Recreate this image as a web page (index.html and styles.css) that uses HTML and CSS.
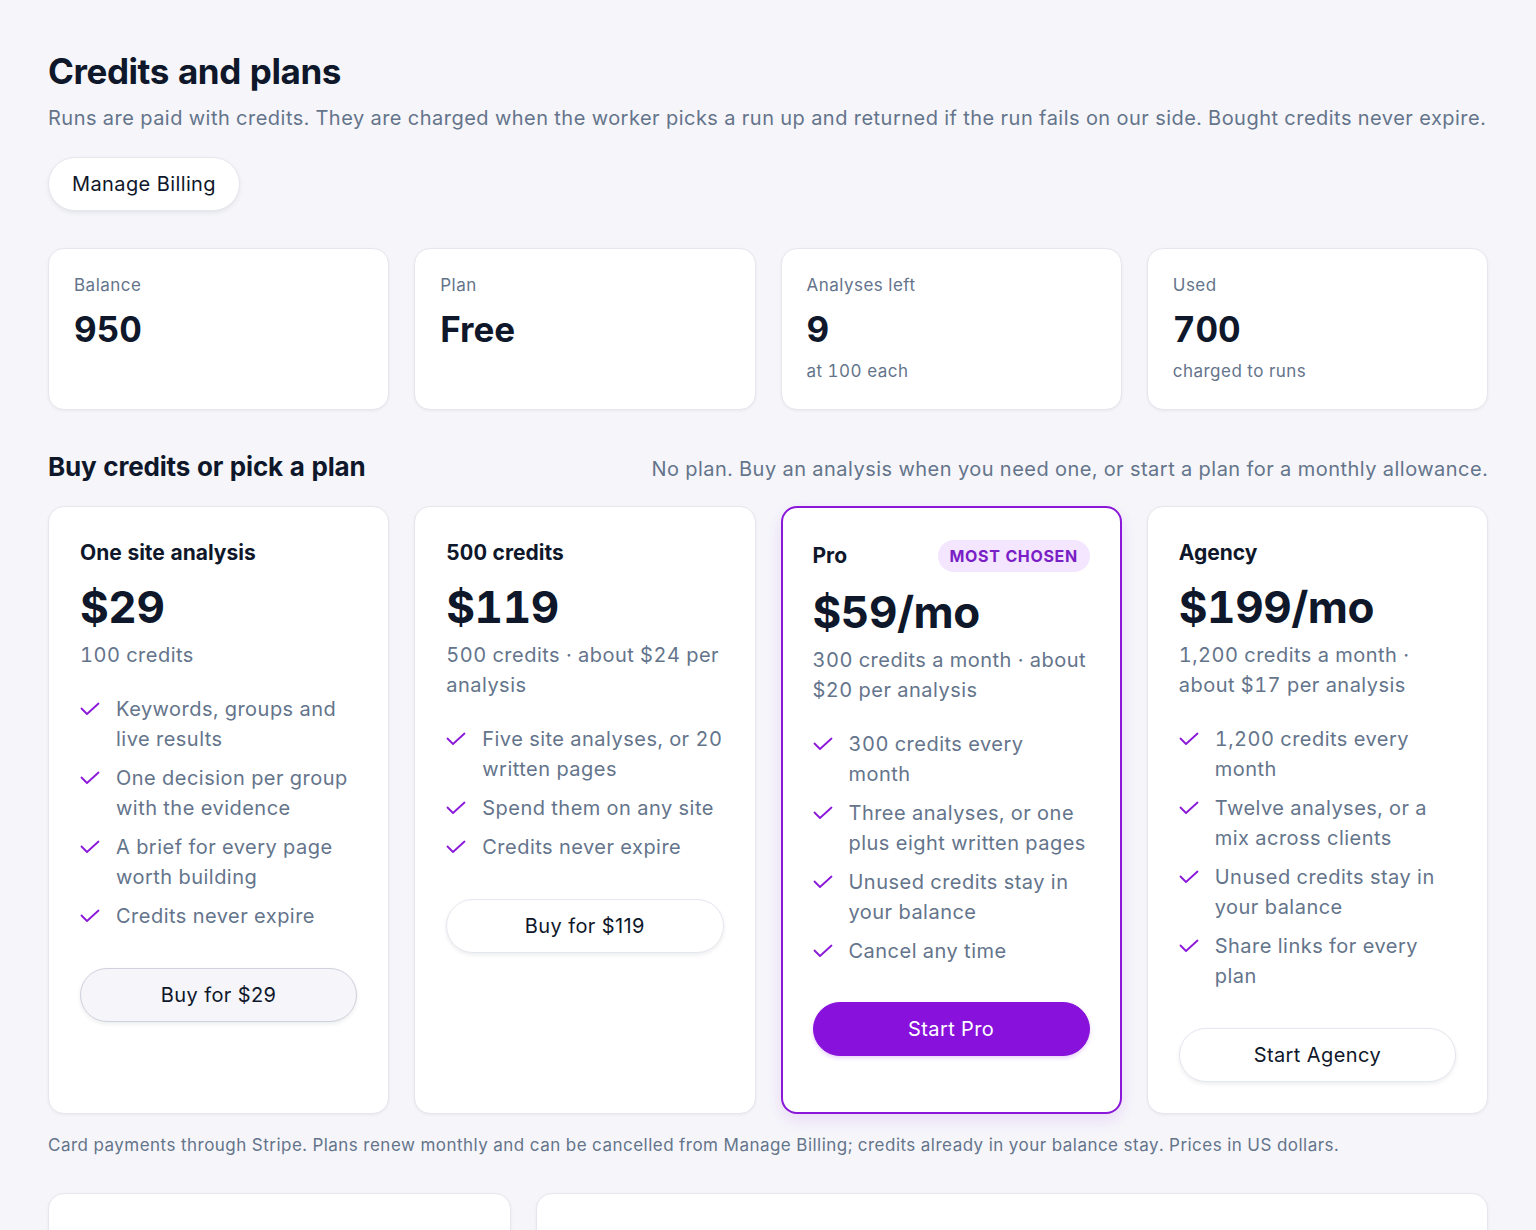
FILE: index.html
```html
<!DOCTYPE html>
<html lang="en">
<head>
<meta charset="utf-8">
<title>Credits and plans</title>
<link rel="stylesheet" href="styles.css">
</head>
<body>
<main class="page">
  <header class="page-head">
    <h1 class="title">Credits and plans</h1>
    <p class="lead">Runs are paid with credits. They are charged when the worker picks a run up and returned if the run fails on our side. Bought credits never expire.</p>
    <button class="btn btn-white manage">Manage Billing</button>
  </header>

  <section class="stats">
    <div class="card stat">
      <div class="stat-label">Balance</div>
      <div class="stat-value">950</div>
    </div>
    <div class="card stat">
      <div class="stat-label">Plan</div>
      <div class="stat-value">Free</div>
    </div>
    <div class="card stat">
      <div class="stat-label">Analyses left</div>
      <div class="stat-value">9</div>
      <div class="stat-sub">at 100 each</div>
    </div>
    <div class="card stat">
      <div class="stat-label">Used</div>
      <div class="stat-value">700</div>
      <div class="stat-sub">charged to runs</div>
    </div>
  </section>

  <div class="section-head">
    <h2 class="section-title">Buy credits or pick a plan</h2>
    <p class="section-note">No plan. Buy an analysis when you need one, or start a plan for a monthly allowance.</p>
  </div>

  <section class="plans">
    <article class="card plan">
      <div class="plan-head"><h3 class="plan-name">One site analysis</h3></div>
      <div class="plan-price">$29</div>
      <p class="plan-sub">100 credits</p>
      <ul class="features">
        <li><svg class="check" viewBox="0 0 20 14"><path d="M1.5 6.5 L7 12 L18.5 1.5"/></svg><span>Keywords, groups and live results</span></li>
        <li><svg class="check" viewBox="0 0 20 14"><path d="M1.5 6.5 L7 12 L18.5 1.5"/></svg><span>One decision per group with the evidence</span></li>
        <li><svg class="check" viewBox="0 0 20 14"><path d="M1.5 6.5 L7 12 L18.5 1.5"/></svg><span>A brief for every page worth building</span></li>
        <li><svg class="check" viewBox="0 0 20 14"><path d="M1.5 6.5 L7 12 L18.5 1.5"/></svg><span>Credits never expire</span></li>
      </ul>
      <button class="btn btn-soft plan-btn">Buy for $29</button>
    </article>

    <article class="card plan">
      <div class="plan-head"><h3 class="plan-name">500 credits</h3></div>
      <div class="plan-price">$119</div>
      <p class="plan-sub">500 credits · about $24 per analysis</p>
      <ul class="features">
        <li><svg class="check" viewBox="0 0 20 14"><path d="M1.5 6.5 L7 12 L18.5 1.5"/></svg><span>Five site analyses, or 20 written pages</span></li>
        <li><svg class="check" viewBox="0 0 20 14"><path d="M1.5 6.5 L7 12 L18.5 1.5"/></svg><span>Spend them on any site</span></li>
        <li><svg class="check" viewBox="0 0 20 14"><path d="M1.5 6.5 L7 12 L18.5 1.5"/></svg><span>Credits never expire</span></li>
      </ul>
      <button class="btn btn-white plan-btn">Buy for $119</button>
    </article>

    <article class="card plan plan-featured">
      <div class="plan-head"><h3 class="plan-name">Pro</h3><span class="badge">MOST CHOSEN</span></div>
      <div class="plan-price">$59/mo</div>
      <p class="plan-sub">300 credits a month · about $20 per analysis</p>
      <ul class="features">
        <li><svg class="check" viewBox="0 0 20 14"><path d="M1.5 6.5 L7 12 L18.5 1.5"/></svg><span>300 credits every month</span></li>
        <li><svg class="check" viewBox="0 0 20 14"><path d="M1.5 6.5 L7 12 L18.5 1.5"/></svg><span>Three analyses, or one plus eight written pages</span></li>
        <li><svg class="check" viewBox="0 0 20 14"><path d="M1.5 6.5 L7 12 L18.5 1.5"/></svg><span>Unused credits stay in your balance</span></li>
        <li><svg class="check" viewBox="0 0 20 14"><path d="M1.5 6.5 L7 12 L18.5 1.5"/></svg><span>Cancel any time</span></li>
      </ul>
      <button class="btn btn-primary plan-btn">Start Pro</button>
    </article>

    <article class="card plan">
      <div class="plan-head"><h3 class="plan-name">Agency</h3></div>
      <div class="plan-price">$199/mo</div>
      <p class="plan-sub">1,200 credits a month · about $17 per analysis</p>
      <ul class="features">
        <li><svg class="check" viewBox="0 0 20 14"><path d="M1.5 6.5 L7 12 L18.5 1.5"/></svg><span>1,200 credits every month</span></li>
        <li><svg class="check" viewBox="0 0 20 14"><path d="M1.5 6.5 L7 12 L18.5 1.5"/></svg><span>Twelve analyses, or a mix across clients</span></li>
        <li><svg class="check" viewBox="0 0 20 14"><path d="M1.5 6.5 L7 12 L18.5 1.5"/></svg><span>Unused credits stay in your balance</span></li>
        <li><svg class="check" viewBox="0 0 20 14"><path d="M1.5 6.5 L7 12 L18.5 1.5"/></svg><span>Share links for every plan</span></li>
      </ul>
      <button class="btn btn-white plan-btn">Start Agency</button>
    </article>
  </section>

  <p class="fineprint">Card payments through Stripe. Plans renew monthly and can be cancelled from Manage Billing; credits already in your balance stay. Prices in US dollars.</p>

  <section class="lower">
    <div class="card lower-card"></div>
    <div class="card lower-card"></div>
  </section>
</main>
</body>
</html>
```

FILE: styles.css
```css
* { box-sizing: border-box; }

html, body {
  margin: 0;
  padding: 0;
  background: #f6f6fa;
}

body {
  font-family: Inter, "Noto Sans", "Liberation Sans", sans-serif;
  color: #0f172a;
  letter-spacing: 0.03em;
  font-variant-numeric: tabular-nums;
  -webkit-font-smoothing: antialiased;
}

.page {
  padding: 50px 48px 0 48px;
}

.title {
  margin: 0;
  font-size: 35px;
  line-height: 42px;
  font-weight: 700;
  letter-spacing: -0.012em;
  color: #0f172a;
}

.lead {
  margin: 11px 0 0 0;
  font-size: 20px;
  line-height: 30px;
  color: #64748b;
}

.btn {
  font-family: inherit;
  font-size: 20px;
  line-height: 24px;
  letter-spacing: 0.02em;
  color: #0f172a;
  border-radius: 999px;
  height: 54px;
  cursor: pointer;
}

.btn-white {
  background: #ffffff;
  border: 1px solid #e5e7ee;
  box-shadow: 0 2px 4px rgba(15, 23, 42, 0.08);
}

.btn-soft {
  background: #f5f5fa;
  border: 1px solid #cfd2dc;
  box-shadow: 0 2px 4px rgba(15, 23, 42, 0.08);
}

.btn-primary {
  background: #8812db;
  border: 1px solid #8812db;
  color: #ffffff;
  box-shadow: 0 2px 4px rgba(136, 18, 219, 0.2);
}

.manage {
  margin-top: 24px;
  padding: 0 22px;
  width: 192px;
}

.card {
  background: #ffffff;
  border: 1px solid #e6e7ee;
  border-radius: 16px;
  box-shadow: 0 1px 3px rgba(15, 23, 42, 0.06);
}

.stats {
  margin-top: 37px;
  display: grid;
  grid-template-columns: repeat(4, 1fr);
  gap: 25px;
}

.stat {
  padding: 24px 25px 26px 25px;
  min-height: 161px;
}

.stat-label {
  font-size: 17px;
  line-height: 24px;
  color: #64748b;
}

.stat-value {
  margin-top: 12px;
  font-size: 35px;
  line-height: 40px;
  font-weight: 700;
  letter-spacing: 0;
  color: #0f172a;
}

.stat-sub {
  margin-top: 10px;
  font-size: 17px;
  line-height: 24px;
  color: #64748b;
}

.section-head {
  margin-top: 40px;
  display: flex;
  justify-content: space-between;
  align-items: baseline;
  gap: 24px;
}

.section-title {
  margin: 0;
  font-size: 26px;
  line-height: 34px;
  font-weight: 700;
  letter-spacing: -0.007em;
}

.section-note {
  margin: 0;
  font-size: 20px;
  line-height: 30px;
  color: #64748b;
}

.plans {
  margin-top: 22px;
  display: grid;
  grid-template-columns: repeat(4, 1fr);
  gap: 25px;
  align-items: stretch;
}

.plan {
  padding: 32px 31px 31px 31px;
  display: flex;
  flex-direction: column;
}

.plan-featured {
  border: 2px solid #8a17d9;
  padding: 32px 30px 31px 30px;
  box-shadow: 0 6px 18px rgba(136, 18, 219, 0.12);
}

.plan-head {
  display: flex;
  align-items: center;
  justify-content: space-between;
  min-height: 28px;
}

.plan-featured .plan-head {
  min-height: 32px;
}

.plan-name {
  margin: 0;
  font-size: 21px;
  line-height: 28px;
  font-weight: 700;
  letter-spacing: 0;
  color: #0f172a;
}

.badge {
  display: inline-block;
  background: #f3e6fe;
  color: #7a1ec6;
  font-size: 16px;
  line-height: 22px;
  font-weight: 700;
  letter-spacing: 0.04em;
  padding: 5px 12px 5px 12px;
  border-radius: 999px;
}

.plan-price {
  margin-top: 14px;
  font-size: 44px;
  line-height: 52px;
  font-weight: 700;
  letter-spacing: -0.01em;
  color: #0f172a;
}

.plan-sub {
  margin: 7px 0 0 0;
  font-size: 20px;
  line-height: 30px;
  color: #64748b;
}

.features {
  list-style: none;
  margin: 24px 0 0 0;
  padding: 0;
  display: flex;
  flex-direction: column;
  gap: 9px;
}

.features li {
  display: flex;
  align-items: flex-start;
  gap: 16px;
  font-size: 20px;
  line-height: 30px;
  color: #64748b;
}

.check {
  flex: none;
  width: 20px;
  height: 14px;
  margin-top: 8px;
  fill: none;
  stroke: #8a17d9;
  stroke-width: 1.8;
  stroke-linecap: round;
  stroke-linejoin: round;
}

.plan-btn {
  margin-top: 37px;
  width: 100%;
}

.plan-featured .plan-btn {
  margin-top: 36px;
}

.fineprint {
  margin: 19px 0 0 0;
  font-size: 17px;
  line-height: 24px;
  color: #64748b;
}

.lower {
  margin-top: 36px;
  display: grid;
  grid-template-columns: 463px 1fr;
  gap: 25px;
}

.lower-card {
  height: 200px;
}
```
